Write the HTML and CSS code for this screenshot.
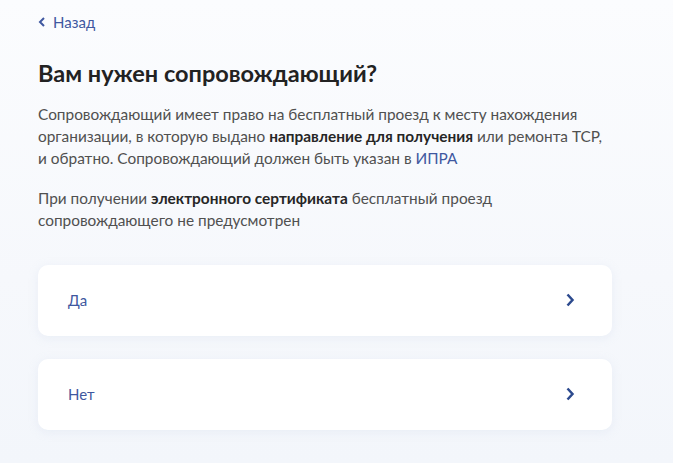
FILE: index.html
```html
<!DOCTYPE html>
<html lang="ru">
<head>
<meta charset="utf-8">
<link rel="stylesheet" href="styles.css">
</head>
<body>
<div class="page">
  <a class="back" href="#"><svg class="back-icon" width="8" height="10" viewBox="0 0 8 10"><path d="M6 1 L2 5 L6 9" fill="none" stroke="currentColor" stroke-width="2"/></svg>Назад</a>
  <h1 class="title">Вам нужен сопровождающий?</h1>
  <p class="text">Сопровождающий имеет право на бесплатный проезд к месту нахождения организации, в которую выдано <b>направление для получения</b> или ремонта ТСР, и обратно. Сопровождающий должен быть указан в <a class="link" href="#">ИПРА</a></p>
  <p class="text">При получении <b>электронного сертификата</b> бесплатный проезд сопровождающего не предусмотрен</p>
  <div class="options">
    <div class="option"><span class="option-label">Да</span><svg class="chev" width="10" height="14" viewBox="0 0 10 14"><path d="M2.5 1.5 L7.5 7 L2.5 12.5" fill="none" stroke="currentColor" stroke-width="2.5"/></svg></div>
    <div class="option"><span class="option-label">Нет</span><svg class="chev" width="10" height="14" viewBox="0 0 10 14"><path d="M2.5 1.5 L7.5 7 L2.5 12.5" fill="none" stroke="currentColor" stroke-width="2.5"/></svg></div>
  </div>
</div>
</body>
</html>
```
FILE: styles.css
```css
html, body { margin: 0; padding: 0; }
body {
  width: 673px;
  height: 463px;
  overflow: hidden;
  background: linear-gradient(180deg, #fbfcfe 0%, #f6f8fc 60%, #f3f6fb 100%);
  font-family: Lato, "Noto Sans", sans-serif;
  color: #505050;
}
.page { padding: 11px 61px 0 38px; }
.back {
  display: inline-flex;
  align-items: center;
  gap: 7px;
  color: #3f58a0;
  text-decoration: none;
  font-size: 15px;
  line-height: 18px;
}
.back-icon { margin-top: 1px; }
.title {
  margin: 27px 0 0;
  font-size: 23.5px;
  line-height: 30px;
  font-weight: 700;
  color: #222;
}
.text {
  margin: 15px 0 0;
  max-width: 574px;
  font-size: 15.4px;
  line-height: 22px;
}
.text + .text { margin-top: 18px; }
.text b { color: #262626; font-weight: 700; }
.link { color: #3f58a0; text-decoration: none; }
.options {
  margin-top: 34px;
  display: flex;
  flex-direction: column;
  gap: 23px;
}
.option {
  height: 71px;
  background: #fff;
  border-radius: 10px;
  display: flex;
  align-items: center;
  justify-content: space-between;
  padding: 0 37px 0 30px;
  box-shadow: 0 2px 10px rgba(200, 210, 230, 0.25);
}
.option-label { color: #3f58a0; font-size: 15px; }
.chev { color: #2c4a8e; }
```
